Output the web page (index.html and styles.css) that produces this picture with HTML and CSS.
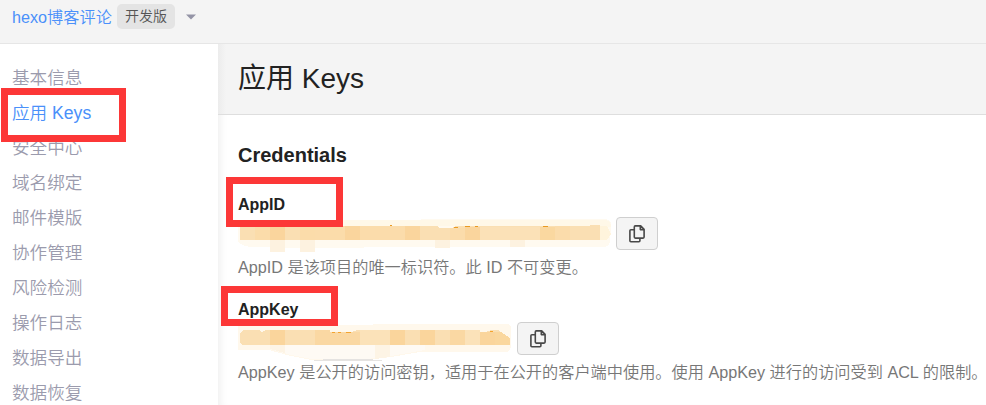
FILE: index.html
```html
<!DOCTYPE html>
<html lang="zh-CN">
<head>
<meta charset="utf-8">
<title>应用 Keys</title>
<link rel="stylesheet" href="styles.css">
</head>
<body>
<header class="topbar">
  <a class="app-name">hexo博客评论</a>
  <span class="badge">开发版</span>
  <svg class="caret" width="10" height="6" viewBox="0 0 10 6"><path d="M0 .5h10L5 5.5z" fill="#9494a6"/></svg>
</header>
<div class="layout">
  <nav class="sidebar">
    <a class="item">基本信息</a>
    <a class="item active">应用 Keys</a>
    <a class="item">安全中心</a>
    <a class="item">域名绑定</a>
    <a class="item">邮件模版</a>
    <a class="item">协作管理</a>
    <a class="item">风险检测</a>
    <a class="item">操作日志</a>
    <a class="item">数据导出</a>
    <a class="item">数据恢复</a>
    <span class="mark mark-nav"></span>
  </nav>
  <main class="content">
    <h1 class="title">应用 Keys</h1>
    <section class="panel">
      <h2 class="heading">Credentials</h2>
      <div class="field">
        <h3 class="label">AppID</h3>
        <div class="row">
          <svg class="mask" width="378" height="34" viewBox="0 0 378 34" shape-rendering="crispEdges">
            <path d="M0 6Q0 3 5 3L368 2Q373 3 373 8L372 25Q371 30 365 30H140Q90 32 60 31L12 30Q0 28 0 23z" fill="#fffaf0"/>
            <path d="M90 3h275q8 0 8 7h-28v-1H90z" fill="#fff8e8"/>
            <path d="M2 9H199l3 2h12l4-2h130l8-1h6v15H2z" fill="#fadfb3"/>
            <path d="M17 9h15v14H17zM62 9h15v14H62zM92 9h15v14H92z" fill="#fbdcaa"/>
            <path d="M32 9h15v14H32zM107 9h15v14H107zM167 9h15v14H167zM227 10h15v13H227z" fill="#fad59d"/>
            <path d="M77 9h15v14H77zM122 9h45v14H122zM212 11h15v12H212zM317 9h15v14H317z" fill="#fbdcab"/>
            <path d="M302 10h15v13H302z" fill="#fad8a0"/>
            <path d="M242 10h60v13H242z" fill="#fbe1b7"/>
            <path d="M362 9h7l4 8-4 6h-7z" fill="#fff4dc"/>
            <path d="M32 23h15v12H32zM62 23h15v12H62zM197 23h15v8H197zM272 23h15v7H272z" fill="#fdf2e0"/>
            <path d="M152 8h2v1h-2zM216 10h4v1h-4zM216 10h3v1h-3zM227 9h5v1h-5zM237 9h3v1h-3zM305 9h5v1h-5z" fill="#e99a22"/>
          </svg>
          <button class="copy" aria-label="复制 AppID">
            <svg width="16" height="18" viewBox="0 0 16 18"><path d="M5.3 4.8H1.9Q.9 4.8.9 5.8v10q0 1 1 1h8q1 0 1-1V13M6.3.9h5.4l3.4 3.4v7.8q0 1-1 1H6.3q-1 0-1-1V1.9q0-1 1-1zM11.3 1v3.6h3.6" fill="none" stroke="#484848" stroke-width="1.6" stroke-linejoin="round"/></svg>
          </button>
        </div>
        <p class="desc">AppID 是该项目的唯一标识符。此 ID 不可变更。</p>
        <span class="mark mark-id"></span>
      </div>
      <div class="field">
        <h3 class="label">AppKey</h3>
        <div class="row">
          <svg class="mask" width="279" height="40" viewBox="0 0 279 40" shape-rendering="crispEdges">
            <path d="M0 3L270 2q3 1 3 5v18q-1 5-5 5H182l-29 5-24 3H73l-20-4-22-6H0z" fill="#fff8ec"/>
            <path d="M35 23h152v5l-34 6-24 3H73l-20-4-18-5z" fill="#fefaf4"/>
            <path d="M32 23h15v8l-15-4zM137 23h15v12l-15 2z" fill="#fdf4e5"/>
            <path d="M72 38q38-2 76 0l-8 1H80z" fill="#e5e3e1"/>
            <path d="M2 11L5 8h16l3 2 4-2h56l8 2h22l5-2h110l6 2h12l6-2h7l8 7v8H4l-2-3z" fill="#fadfb3"/>
            <path d="M32 8h15v15H32zM152 8h15v15H152zM182 8h15v15H182zM242 10h15v13H242z" fill="#fad59c"/>
            <path d="M77 8h15v15H77zM92 10h15v13H92zM107 10h15v13H107zM212 8h15v15H212z" fill="#fad8a3"/>
            <path d="M122 8h30v15H122zM227 8h15v15H227z" fill="#fbe2b9"/>
            <path d="M257 10h6l9 6v7H257z" fill="#fad79e"/>
            <path d="M94 10h3v1h-3zM100 10h3v1h-3zM108 10h5v1h-5zM252 9h3v1h-3z" fill="#f4a42f"/>
          </svg>
          <button class="copy" aria-label="复制 AppKey">
            <svg width="16" height="18" viewBox="0 0 16 18"><path d="M5.3 4.8H1.9Q.9 4.8.9 5.8v10q0 1 1 1h8q1 0 1-1V13M6.3.9h5.4l3.4 3.4v7.8q0 1-1 1H6.3q-1 0-1-1V1.9q0-1 1-1zM11.3 1v3.6h3.6" fill="none" stroke="#484848" stroke-width="1.6" stroke-linejoin="round"/></svg>
          </button>
        </div>
        <p class="desc">AppKey 是公开的访问密钥，适用于在公开的客户端中使用。使用 AppKey 进行的访问受到 ACL 的限制。</p>
        <span class="mark mark-key"></span>
      </div>
    </section>
  </main>
</div>
</body>
</html>
```

FILE: styles.css
```css
* { box-sizing: border-box; }

body {
  margin: 0;
  height: 405px;
  overflow: hidden;
  background: #fff;
  color: #222;
  font-family: "Liberation Sans", "Noto Sans CJK SC", sans-serif;
  font-weight: 350;
}

.topbar {
  display: flex;
  align-items: center;
  height: 44px;
  padding: 0 12px 11px;
  background: #f4f4f4;
  border-bottom: 1px solid #e6e6e6;
}

.app-name {
  width: 105px;
  color: #4a90fa;
  font-size: 16.2px;
  white-space: nowrap;
}

.badge {
  width: 58px;
  height: 25px;
  border-radius: 5px;
  background: #e4e4e4;
  color: #555;
  font-size: 14px;
  line-height: 24px;
  text-align: center;
}

.caret { margin: 2px 0 0 11px; }

.layout { display: flex; height: 361px; }

.sidebar {
  position: relative;
  width: 218px;
  flex: none;
  padding: 17px 12px 0;
}

.item {
  display: block;
  height: 35px;
  line-height: 35px;
  font-size: 17.6px;
  color: #9b9bad;
  white-space: nowrap;
}

.item.active { color: #4a90fa; }

.content {
  flex: 1;
  min-width: 0;
  box-shadow: inset 8px 0 8px -6px rgba(0, 0, 0, 0.07);
}

.title {
  height: 71px;
  margin: 0;
  padding-left: 20px;
  background: linear-gradient(90deg, #ececec, #f4f4f4 8px);
  border-bottom: 1px solid #dedede;
  font-size: 28px;
  font-weight: 400;
  line-height: 70px;
}

.panel { padding: 28px 0 0 20px; }

.heading {
  margin: 0 0 25px;
  font-size: 20px;
  font-weight: 700;
  line-height: 24px;
}

.field { position: relative; height: 105px; }

.label {
  height: 24px;
  margin: 0;
  font-size: 16px;
  font-weight: 700;
  line-height: 26px;
}

.row { display: flex; height: 38px; }

.mask { flex: none; margin-top: 1px; overflow: visible; }

.copy {
  display: flex;
  align-items: center;
  justify-content: center;
  width: 42px;
  height: 33px;
  margin-top: 1px;
  padding: 0;
  border: 1px solid #cfcfcf;
  border-radius: 4px;
  background: #f4f4f4;
}

.desc {
  margin: 0;
  color: #777;
  font-size: 16.22px;
  line-height: 26px;
  white-space: nowrap;
}

.mark {
  position: absolute;
  border: 7px solid #fc3737;
}

.mark-nav { left: 1px; top: 44px; width: 125px; height: 54px; }
.mark-id { left: -12px; top: -15px; width: 117px; height: 50px; }
.mark-key { left: -17px; top: -11px; width: 117px; height: 40px; }
```
